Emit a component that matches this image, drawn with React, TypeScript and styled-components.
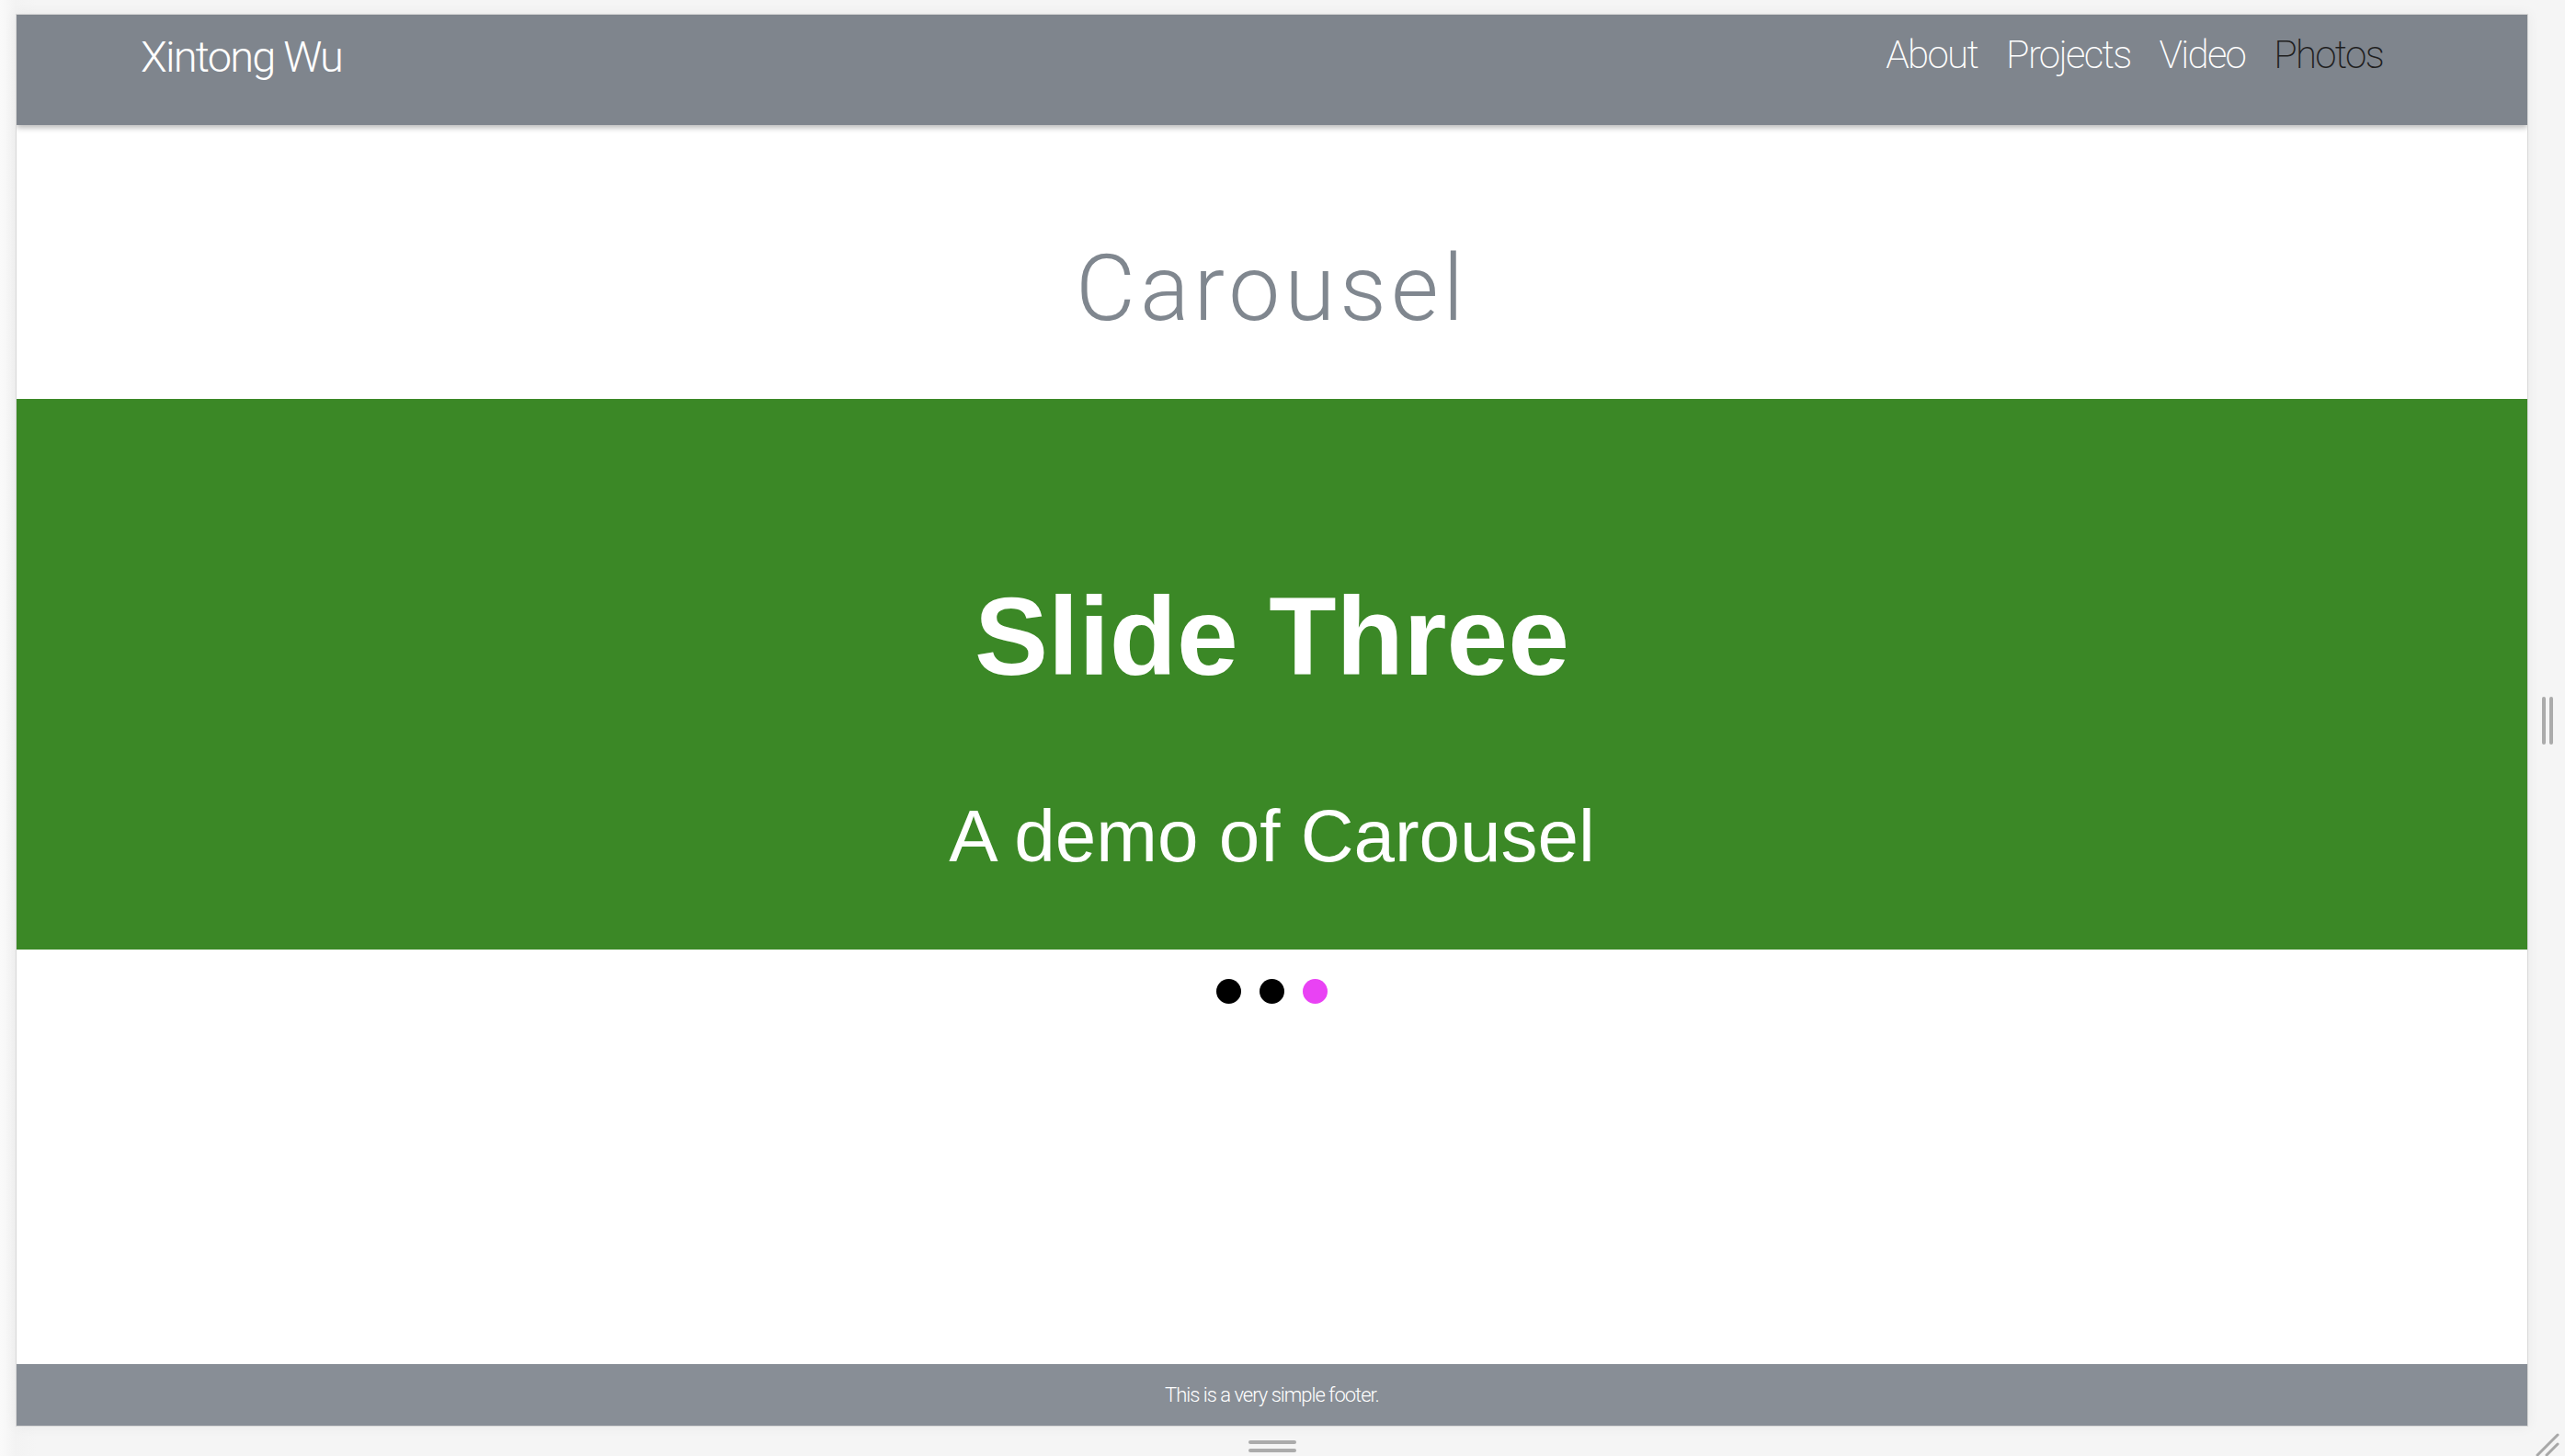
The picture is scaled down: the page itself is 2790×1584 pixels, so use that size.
import React from "react";
import styled, { createGlobalStyle } from "styled-components";

const GlobalStyle = createGlobalStyle`
  html, body {
    margin: 0;
    padding: 0;
    background: #f5f5f5;
  }
  body {
    font-family: "Roboto", "Liberation Sans", sans-serif;
    overflow: hidden;
  }
`;

const LIGHT = `"Roboto", "Inter", "Liberation Sans", sans-serif`;
const HELV = `"Liberation Sans", Arial, sans-serif`;

const Stage = styled.div`
  position: relative;
  width: 2790px;
  height: 1584px;
  box-sizing: border-box;
  padding: 15px 0 0 17px;
  display: flex;
  flex-direction: column;
  background: linear-gradient(90deg, #fafafa 0px, #f3f3f3 17px, #f5f5f5 40px);
`;

const DeviceRow = styled.div`
  display: flex;
  align-items: center;
`;

const Frame = styled.div`
  width: 2733px;
  height: 1537px;
  box-sizing: border-box;
  border: 1px solid #d8d8d8;
  background: #ffffff;
  display: flex;
  flex-direction: column;
  box-shadow: 0 0 14px rgba(0, 0, 0, 0.05);
  overflow: hidden;
`;

const Header = styled.header`
  position: relative;
  z-index: 1;
  flex: 0 0 120px;
  background: #7f858d;
  box-shadow: 0 3px 6px rgba(0, 0, 0, 0.28);
  display: flex;
  justify-content: space-between;
  align-items: flex-start;
  padding: 0 157px 0 135px;
  box-sizing: border-box;
`;

const Brand = styled.a`
  font-family: ${LIGHT};
  font-weight: 300;
  font-size: 47px;
  line-height: 1.2;
  color: #ffffff;
  text-decoration: none;
  padding-top: 18px;
  letter-spacing: -1.8px;
`;

const Nav = styled.nav`
  display: flex;
  gap: 31px;
  padding-top: 19px;
`;

const NavLink = styled.a<{ $active?: boolean }>`
  font-family: ${LIGHT};
  font-weight: 200;
  font-size: 42px;
  line-height: 1.2;
  letter-spacing: -1.7px;
  color: ${(p) => (p.$active ? "#1f1f1f" : "#ffffff")};
  text-decoration: none;
`;

const Main = styled.main`
  flex: 1;
  display: flex;
  flex-direction: column;
  align-items: stretch;
`;

const Title = styled.h1`
  margin: 118px 0 60px;
  text-align: center;
  font-family: ${LIGHT};
  font-weight: 300;
  font-size: 100px;
  line-height: 1.2;
  letter-spacing: 5px;
  color: #80878f;
`;

const Slide = styled.section`
  height: 599px;
  background: #3b8826;
  display: flex;
  flex-direction: column;
  align-items: center;
  padding-top: 189px;
  box-sizing: border-box;
  gap: 103px;
  color: #ffffff;
`;

const SlideHeading = styled.h2`
  margin: 0;
  font-family: ${HELV};
  font-weight: 700;
  font-size: 120px;
  line-height: 1.15;
`;

const SlideText = styled.p`
  margin: 0;
  font-family: ${HELV};
  font-weight: 400;
  font-size: 80px;
  line-height: 1.15;
`;

const Dots = styled.div`
  display: flex;
  justify-content: center;
  gap: 20px;
  margin-top: 32px;
`;

const Dot = styled.span<{ $active?: boolean }>`
  width: 27px;
  height: 27px;
  border-radius: 50%;
  background: ${(p) => (p.$active ? "#e942f4" : "#000000")};
`;

const Footer = styled.footer`
  flex: 0 0 67px;
  background: #888e96;
  display: flex;
  justify-content: center;
  align-items: center;
  font-family: ${LIGHT};
  font-weight: 300;
  font-size: 22px;
  color: #ffffff;
  letter-spacing: -1px;
`;

const SideGrip = styled.div`
  display: flex;
  gap: 4px;
  margin-left: 15px;
`;

const VBar = styled.span`
  width: 4px;
  height: 52px;
  border-radius: 2px;
  background: #ababab;
`;

const BottomGrip = styled.div`
  width: 2733px;
  display: flex;
  flex-direction: column;
  align-items: center;
  gap: 5px;
  padding-top: 15px;
`;

const HBar = styled.span`
  width: 52px;
  height: 4px;
  border-radius: 2px;
  background: #ababab;
`;

const CornerGrip = styled.svg`
  position: absolute;
  right: 4px;
  bottom: 0;
`;

export default function App() {
  return (
    <>
      <GlobalStyle />
      <Stage>
        <DeviceRow>
          <Frame>
            <Header>
              <Brand href="#">Xintong Wu</Brand>
              <Nav>
                <NavLink href="#">About</NavLink>
                <NavLink href="#">Projects</NavLink>
                <NavLink href="#">Video</NavLink>
                <NavLink href="#" $active>
                  Photos
                </NavLink>
              </Nav>
            </Header>
            <Main>
              <Title>Carousel</Title>
              <Slide>
                <SlideHeading>Slide Three</SlideHeading>
                <SlideText>A demo of Carousel</SlideText>
              </Slide>
              <Dots>
                <Dot />
                <Dot />
                <Dot $active />
              </Dots>
            </Main>
            <Footer>This is a very simple footer.</Footer>
          </Frame>
          <SideGrip>
            <VBar />
            <VBar />
          </SideGrip>
        </DeviceRow>
        <BottomGrip>
          <HBar />
          <HBar />
        </BottomGrip>
        <CornerGrip width="28" height="26" viewBox="0 0 28 26">
          <line x1="2" y1="25" x2="24" y2="3" stroke="#a8a8a8" strokeWidth="3" strokeLinecap="round" />
          <line x1="12" y1="25" x2="24" y2="13" stroke="#a8a8a8" strokeWidth="3" strokeLinecap="round" />
        </CornerGrip>
      </Stage>
    </>
  );
}
